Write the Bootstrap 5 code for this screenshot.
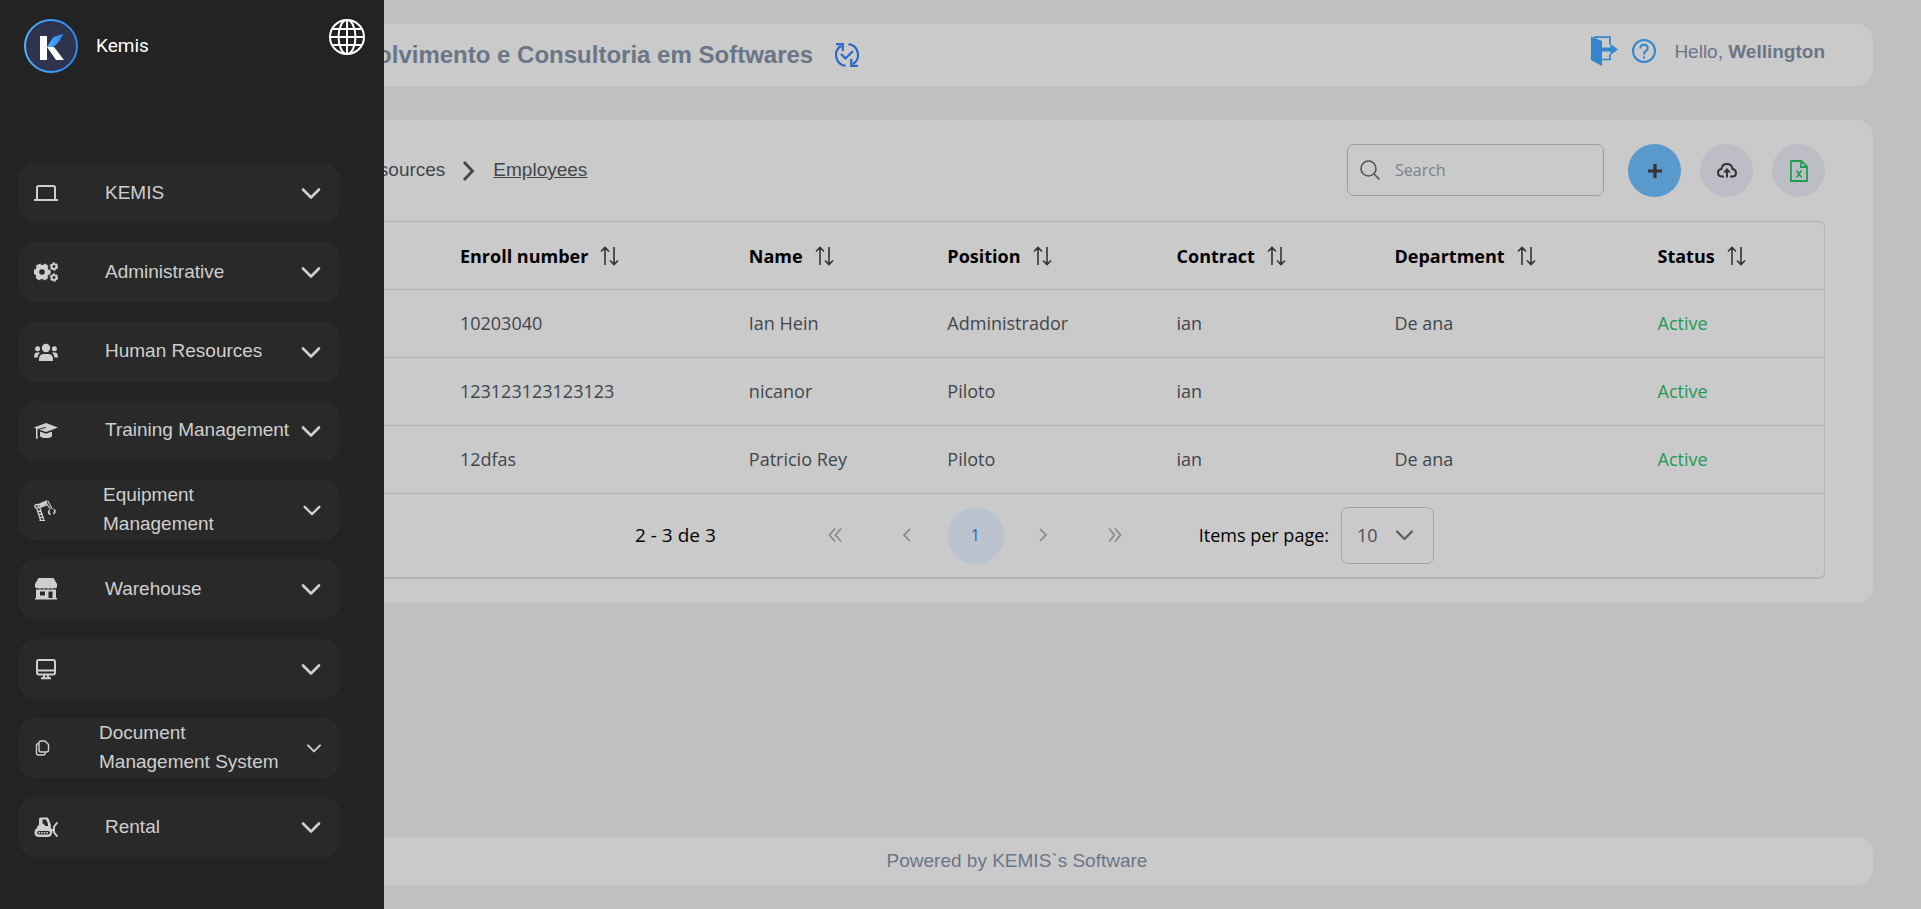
<!DOCTYPE html>
<html lang="en">
<head>
<meta charset="utf-8">
<meta name="viewport" content="width=device-width, initial-scale=1">
<title>Kemis - Employees</title>
<link href="https://cdn.jsdelivr.net/npm/bootstrap@5.3.0/dist/css/bootstrap.min.css" rel="stylesheet">
<style>
:root { --page: #c0c0c2; --panel: #cacaca; --line: #b2b3b5; --slate: #6b7588; --ink: #41464d; --blue: #3385cd; }
body { background: var(--page); font-family: Arial, "Liberation Sans", sans-serif; font-size: 19px; line-height: 29px; color: var(--ink); }
svg { display: block; flex: none; }

/* side menu */
.side { width: 384px; background: #232323; padding: 19px 19px 52px; z-index: 10; }
.brand { height: 144px; padding-left: 5px; }
.brand-name { font-family: Roboto, sans-serif; color: #fff; line-height: 54px; margin-left: 18px; }
.menu-item { width: 321px; height: 60px; padding: 0 17px 0 15px; border: 0; border-radius: 16px; background: #292929; color: #cfcfcf; text-align: left; --icon: 24px; }
.menu-item svg { width: var(--icon); height: var(--icon); }
.menu-item.mid { --icon: 22px; }
.menu-item.mini { --icon: 18px; }
.menu-label { margin-left: 47px; padding-bottom: 2px; }

/* page */
.page { margin-left: 161px; margin-right: 48px; padding: 24px 0; min-height: 100vh; }
.panel { background: var(--panel); border-radius: 16px; }
.topbar { height: 62px; padding: 0 48px 2px 52px; color: var(--slate); }
.topbar .sync { margin-left: 22px; padding-top: 2px; }
.company { font-size: 24px; font-weight: 700; }
.user-area { margin-bottom: 6px; }
.user-area .help { margin: 0 18px 0 14px; }
.content { margin-top: 34px; padding: 24px 48px; }
.crumbs { padding-bottom: 2px; }
.crumbs a { color: var(--ink); }
.crumbs svg { margin-top: 2px; }
.search-box { width: 257px; height: 52px; border: 1px solid #9a9ea2; border-radius: 7px; padding-left: 12px; }
.search-box input { font: 16px/24px "Segoe UI", "Open Sans", sans-serif; color: var(--ink); background: none; border: 0; outline: 0; margin-left: 13px; min-width: 0; }
.search-box input::placeholder { color: #7c818b; opacity: 1; }
.tools { gap: 19px; }
.round { width: 53px; height: 53px; border: 0; border-radius: 50%; padding: 0; background: #bdbec5; }
.round.add { background: #5a99cc; }

/* employees table */
.grid-wrap { margin-top: 24px; border: 1px solid var(--line); border-bottom: 2px solid #b4b4b9; border-radius: 6px; font-family: "Segoe UI", "Open Sans", sans-serif; font-size: 18px; }
.people { table-layout: fixed; width: 100%; }
.people th, .people td { height: 68px; padding: 0 24px; border-bottom: 1px solid var(--line); white-space: nowrap; }
.people th { height: 67px; padding-top: 2px; color: #000; font-weight: 700; }
.people th button { font: inherit; color: inherit; background: none; border: 0; padding: 0; }
.people .state { color: #229a52; }
.pager { height: 83px; padding-left: 35px; color: #000; }
.pager .count { font-size: 19px; }
.pager button { width: 57px; height: 57px; border: 0; border-radius: 50%; background: none; padding: 0; color: #85888c; }
.pager button.current { background: #bbc4ce; color: #2f5fc9; font-size: 16px; }
.pager-nav { margin: 0 55px 0 91px; gap: 11px; }
.size-select { width: 93px; height: 57px; margin-left: 12px; padding: 0 15px; font-size: 18px; color: #4a4f57; border: 1px solid #a4a6a9; border-radius: 7px; appearance: none;
  background: no-repeat right 19px center / 19px 19px url("data:image/svg+xml,%3Csvg xmlns='http://www.w3.org/2000/svg' viewBox='0 0 19 19' fill='none' stroke='%23595e66' stroke-width='2.2' stroke-linecap='round' stroke-linejoin='round'%3E%3Cpath d='M2 5.5l7.500 7.500 7.500-7.500'/%3E%3C/svg%3E"); }
.foot { height: 48px; padding-bottom: 2px; color: var(--slate); }
</style>
</head>
<body>

<svg width="0" height="0" class="position-absolute" aria-hidden="true">
  <symbol id="down" viewBox="0 0 24 24"><path d="M4 8.500l8 8 8-8" fill="none" stroke="currentColor" stroke-width="2.600" stroke-linecap="round" stroke-linejoin="round"/></symbol>
  <symbol id="sort" viewBox="0 0 19 20"><path d="M5 19V1.500M1 5.500l4-4 4 4M14 1v17.500M10 14.500l4 4 4-4" fill="none" stroke="#333" stroke-width="1.600"/></symbol>
</svg>

<aside class="side position-fixed top-0 start-0 vh-100 d-flex flex-column">
  <div class="brand d-flex align-items-start flex-shrink-0">
    <svg width="54" height="54" viewBox="0 0 54 54">
      <defs><linearGradient id="ring"><stop offset="0" stop-color="#4fb0ff"/><stop offset="1" stop-color="#2a86f5"/></linearGradient></defs>
      <circle cx="27" cy="27" r="26" fill="#30334d" stroke="url(#ring)" stroke-width="2"/>
      <path d="M16 17h7v24h-7zM23 28h7l10 13h-8z" fill="#fff"/><path d="M23 28l5-8q2-3 11.500-5l-5 8q-3 4-6 5z" fill="url(#ring)"/>
    </svg>
    <span class="brand-name">Kemis</span>
    <svg class="ms-auto" width="36" height="36" viewBox="0 0 36 36" fill="none" stroke="#fff" stroke-width="2"><circle cx="18" cy="18" r="17"/><ellipse cx="18" cy="18" rx="8.500" ry="17"/><path d="M18 1v34M1 18h34M4 10h28M4 26h28"/></svg>
  </div>

  <nav class="d-flex flex-column justify-content-between flex-fill">
    <button class="menu-item d-flex align-items-center">
      <svg viewBox="0 0 24 24"><path d="M3 18.500V6.500q0-1.500 1.500-1.500h15q1.500 0 1.500 1.500v12" fill="none" stroke="currentColor" stroke-width="2"/><path d="M0 18h24v2H0z" fill="currentColor"/></svg>
      <span class="menu-label">KEMIS</span><svg class="ms-auto"><use href="#down"/></svg></button>
    <button class="menu-item d-flex align-items-center">
      <svg viewBox="0 0 24 24" fill="none" stroke="currentColor"><circle cx="8" cy="12" r="5" stroke-width="4.400"/><circle cx="8" cy="12" r="7.700" stroke-width="2" stroke-dasharray="5 3.063" stroke-dashoffset="2.500"/><circle cx="20" cy="6.500" r="2.400" stroke-width="1.900"/><circle cx="20" cy="6.500" r="3.500" stroke-width="1.400" stroke-dasharray="2.200 1.465"/><circle cx="20" cy="17.500" r="2.400" stroke-width="1.900"/><circle cx="20" cy="17.500" r="3.500" stroke-width="1.400" stroke-dasharray="2.200 1.465"/></svg>
      <span class="menu-label">Administrative</span><svg class="ms-auto"><use href="#down"/></svg></button>
    <button class="menu-item d-flex align-items-center">
      <svg viewBox="0 0 24 24" fill="currentColor"><circle cx="12" cy="8" r="4.200"/><circle cx="3.600" cy="8.700" r="2.500"/><circle cx="20.400" cy="8.700" r="2.500"/><path d="M5 21q-.5-7 4.500-7h5q5 0 4.500 7zM0 17.500Q0 12.500 3 12.500h3q-2 2-2.500 5zM24 17.500q0-5-3-5h-3q2 2 2.500 5z"/></svg>
      <span class="menu-label">Human Resources</span><svg class="ms-auto"><use href="#down"/></svg></button>
    <button class="menu-item d-flex align-items-center">
      <svg viewBox="0 0 24 24" fill="currentColor"><path d="M0 8.500L12 4l12 4.500L12 13 5 10.500l7-1.500-.3-1L3.500 10v8l.7 1.500H1.600L2 18V9.500zM6 12.500l6 2.200 6-2.200v4.500q-1 2-6 2t-6-2z"/></svg>
      <span class="menu-label">Training Management</span><svg class="ms-auto"><use href="#down"/></svg></button>
    <button class="menu-item mid d-flex align-items-center">
      <svg viewBox="0 0 24 24" fill="none" stroke="currentColor"><circle cx="3" cy="8" r="2" stroke-width="1.500"/><path d="M4 6.500L14.500 2M5.500 9.500L14 6" stroke-width="1.600"/><path d="M6 7l8-3.500" stroke-width="3"/><path d="M15 2l5 9M13.500 5l4.500 6" stroke-width="1.200"/><path d="M3 10.500l4 12M6.500 10l4 12M4 13l4 1M5 17l4-1M7 20h3M6 23.500h6" stroke-width="1.500"/><path d="M22 11q2 4-1 5M17 12q-2.500 3 1 5" stroke-width="1.800"/></svg>
      <span class="menu-label">Equipment<br>Management</span><svg class="ms-auto"><use href="#down"/></svg></button>
    <button class="menu-item d-flex align-items-center">
      <svg viewBox="0 0 24 24"><path d="M4.500 1h15L23 7v3q-1 2-2.800 1-2 1.500-4 0-2 1.500-4.200 0-2 1.500-4.200 0-2 1.500-4 0Q2 12 1 10V7z" fill="currentColor"/><path fill-rule="evenodd" d="M2 12.500h20V21h1v1.500H1V21h1zM6 14.500v4h5v-4zM14.500 14.500V21h4v-6.500z" fill="currentColor"/></svg>
      <span class="menu-label">Warehouse</span><svg class="ms-auto"><use href="#down"/></svg></button>
    <button class="menu-item d-flex align-items-center" aria-label="Desktop">
      <svg viewBox="0 0 24 24" fill="none" stroke="currentColor" stroke-width="2"><rect x="3" y="3" width="18" height="14.500" rx="2"/><path d="M3 13.500h18M10.500 18l-1 3M13.500 18l1 3M7 21.300h10"/></svg>
      <svg class="ms-auto"><use href="#down"/></svg></button>
    <button class="menu-item mini d-flex align-items-center">
      <svg viewBox="0 0 18 18" fill="none" stroke="currentColor" stroke-width="1.400"><path d="M7 2h4l3.500 3.500v5.500q0 2-2 2H7q-2 0-2-2V4q0-2 2-2zM5 4.500Q2.500 4.500 2.500 6.500v7.500q0 2 2 2h5q1.800 0 2-3"/></svg>
      <span class="menu-label">Document<br>Management System</span><svg class="ms-auto"><use href="#down"/></svg></button>
    <button class="menu-item d-flex align-items-center">
      <svg viewBox="0 0 24 24"><path fill-rule="evenodd" d="M6.500 2.500H13q1 0 1.500 1l2.300 6v3q1.700 1.500 1.500 4.500-.5 5-4.500 5H4.500Q.5 21.500.5 17.500q0-3 2-4L4 10.500q1 0 1-1V4q0-1.500 1.500-1.500zM8.500 4.500V8l3 3H14V9l-2-4.500zM5 16q-2 0-2 1.700T5 19.500h9q2 0 2-1.800T14 16z" fill="currentColor"/><path d="M4.500 17.800h10" stroke="currentColor" stroke-width="1.600" stroke-dasharray="1.600 1"/><path d="M17.500 15h3M23.500 7.500L20 11.500v6l3.500 4" fill="none" stroke="currentColor" stroke-width="1.900"/></svg>
      <span class="menu-label">Rental</span><svg class="ms-auto"><use href="#down"/></svg></button>
  </nav>
</aside>

<div class="page d-flex flex-column">
  <header class="panel topbar d-flex align-items-center">
    <span class="company">Kemis Desenvolvimento e Consultoria em Softwares</span>
    <a href="#" class="sync" aria-label="Synchronise">
      <svg width="24" height="24" viewBox="0 0 24 24" fill="none" stroke="#2f68c8" stroke-width="2.200"><path d="M10.500 22.800A10.800 10.800 0 0 1 6 3M13.500 1.200A10.800 10.800 0 0 1 18 21M1 1.200h6.800V8M23 22.800h-6.800V16M6 11l4.500 4.500L18 8"/></svg></a>
    <div class="user-area d-flex align-items-center ms-auto">
      <a href="#" aria-label="Log out"><svg width="27" height="30" viewBox="0 0 27 30" fill="#3385cd"><path d="M0 0.500L11 5v25L0 24zM11 11.500h8.500V8l7.500 5.500-7.500 5.500v-3.500H11z"/><path d="M3 1.200h16V9M19 18v5.500h-8" fill="none" stroke="#3385cd" stroke-width="1.700"/></svg></a>
      <a href="#" class="help" aria-label="Help"><svg width="24" height="24" viewBox="0 0 24 24" fill="none" stroke="#3385cd" stroke-width="2"><circle cx="12" cy="12" r="11"/><path d="M8.300 9.500q0-3.700 3.700-3.700t3.700 3.400q0 1.500-1.800 2.700T12 15.500M12 17.200v2.300"/></svg></a>
      <span>Hello, <b>Wellington</b></span>
    </div>
  </header>

  <main class="panel content">
    <div class="d-flex align-items-center">
      <nav class="crumbs d-flex align-items-center" aria-label="breadcrumb">
        <a href="#" aria-label="Home"><svg width="31" height="24" viewBox="0 0 31 24" fill="none" stroke="currentColor" stroke-width="2"><path d="M4 12L15 2l11 10M7 10v12h16V10"/></svg></a>
        <svg class="mx-3" width="16" height="20" viewBox="0 0 16 20"><path d="M3 1l8.500 9L3 19" fill="none" stroke="currentColor" stroke-width="2.800"/></svg>
        <a href="#" class="text-decoration-none">Human Resources</a>
        <svg class="mx-3" width="16" height="20" viewBox="0 0 16 20"><path d="M3 1l8.500 9L3 19" fill="none" stroke="currentColor" stroke-width="2.800"/></svg>
        <a href="#" aria-current="page">Employees</a>
      </nav>
      <label class="search-box d-flex align-items-center align-self-start ms-auto me-4">
        <svg width="20" height="20" viewBox="0 0 20 20" fill="none" stroke="#50555c" stroke-width="1.600"><circle cx="8.500" cy="8.500" r="7.500"/><path d="M14 14l5.500 5.500"/></svg>
        <input type="search" placeholder="Search" aria-label="Search">
      </label>
      <div class="tools d-flex">
        <button class="round add d-flex align-items-center justify-content-center" aria-label="Add"><svg width="14" height="14" viewBox="0 0 14 14"><path d="M7 0v14M0 7h14" stroke="#333" stroke-width="3.200"/></svg></button>
        <button class="round d-flex align-items-center justify-content-center" aria-label="Upload"><svg width="20" height="15" viewBox="0 0 20 15" fill="none" stroke="#333" stroke-width="2"><path d="M7 13.500H4.500Q1 13 1 9.500 1 6.500 4.500 6 5 1 10 1t5.500 5Q19 6.500 19 9.800q0 3.700-3.500 3.700H13M10 14.500V7"/><path d="M6 9.500L10 5l4 4.500z" fill="#333" stroke="none"/></svg></button>
        <button class="round d-flex align-items-center justify-content-center" aria-label="Export to Excel"><svg width="18" height="22" viewBox="0 0 18 22" fill="none" stroke="#1f9d50" stroke-width="1.800"><path d="M1 1h10.500L17 6.500V21H1zM11 1v6h6"/><path d="M6.500 10.500l5 7M11.500 10.500l-5 7" stroke-width="1.500"/></svg></button>
      </div>
    </div>

    <div class="grid-wrap">
      <table class="people">
        <colgroup><col style="width:14%"><col style="width:17.9%"><col style="width:12.3%"><col style="width:14.2%"><col style="width:13.5%"><col style="width:16.3%"><col></colgroup>
        <thead><tr>
          <th></th>
          <th><button class="d-flex align-items-center">Enroll number<svg class="ms-2" width="27" height="20"><use href="#sort"/></svg></button></th>
          <th><button class="d-flex align-items-center">Name<svg class="ms-2" width="27" height="20"><use href="#sort"/></svg></button></th>
          <th><button class="d-flex align-items-center">Position<svg class="ms-2" width="27" height="20"><use href="#sort"/></svg></button></th>
          <th><button class="d-flex align-items-center">Contract<svg class="ms-2" width="27" height="20"><use href="#sort"/></svg></button></th>
          <th><button class="d-flex align-items-center">Department<svg class="ms-2" width="27" height="20"><use href="#sort"/></svg></button></th>
          <th><button class="d-flex align-items-center">Status<svg class="ms-2" width="27" height="20"><use href="#sort"/></svg></button></th>
        </tr></thead>
        <tbody>
          <tr><td></td><td>10203040</td><td>Ian Hein</td><td>Administrador</td><td>ian</td><td>De ana</td><td class="state">Active</td></tr>
          <tr><td></td><td>123123123123123</td><td>nicanor</td><td>Piloto</td><td>ian</td><td></td><td class="state">Active</td></tr>
          <tr><td></td><td>12dfas</td><td>Patricio Rey</td><td>Piloto</td><td>ian</td><td>De ana</td><td class="state">Active</td></tr>
        </tbody>
      </table>
      <div class="pager d-flex align-items-center justify-content-center">
        <span class="count">2 - 3 de 3</span>
        <div class="pager-nav d-flex">
          <button class="d-flex align-items-center justify-content-center me-1" aria-label="First page"><svg width="14" height="14" viewBox="0 0 14 14" fill="none" stroke="currentColor" stroke-width="1.600"><path d="M7 .5L1.500 7 7 13.500M13 .5L7.500 7l5.500 6.500"/></svg></button>
          <button class="d-flex align-items-center justify-content-center" aria-label="Previous page"><svg width="14" height="14" viewBox="0 0 14 14" fill="none" stroke="currentColor" stroke-width="1.700"><path d="M10 1L4 7l6 6"/></svg></button>
          <button class="current">1</button>
          <button class="d-flex align-items-center justify-content-center" aria-label="Next page"><svg width="14" height="14" viewBox="0 0 14 14" fill="none" stroke="currentColor" stroke-width="1.700"><path d="M4 1l6 6-6 6"/></svg></button>
          <button class="d-flex align-items-center justify-content-center ms-1" aria-label="Last page"><svg width="14" height="14" viewBox="0 0 14 14" fill="none" stroke="currentColor" stroke-width="1.600"><path d="M1 .5L6.500 7 1 13.500M7 .5l5.500 6.500L7 13.500"/></svg></button>
        </div>
        <label for="page-size">Items per page:</label>
        <select id="page-size" class="size-select"><option>10</option><option>25</option><option>50</option></select>
      </div>
    </div>
  </main>

  <footer class="panel foot d-flex align-items-center justify-content-center mt-auto">Powered by KEMIS`s Software</footer>
</div>

<script src="https://cdn.jsdelivr.net/npm/bootstrap@5.3.0/dist/js/bootstrap.bundle.min.js"></script>
</body>
</html>
